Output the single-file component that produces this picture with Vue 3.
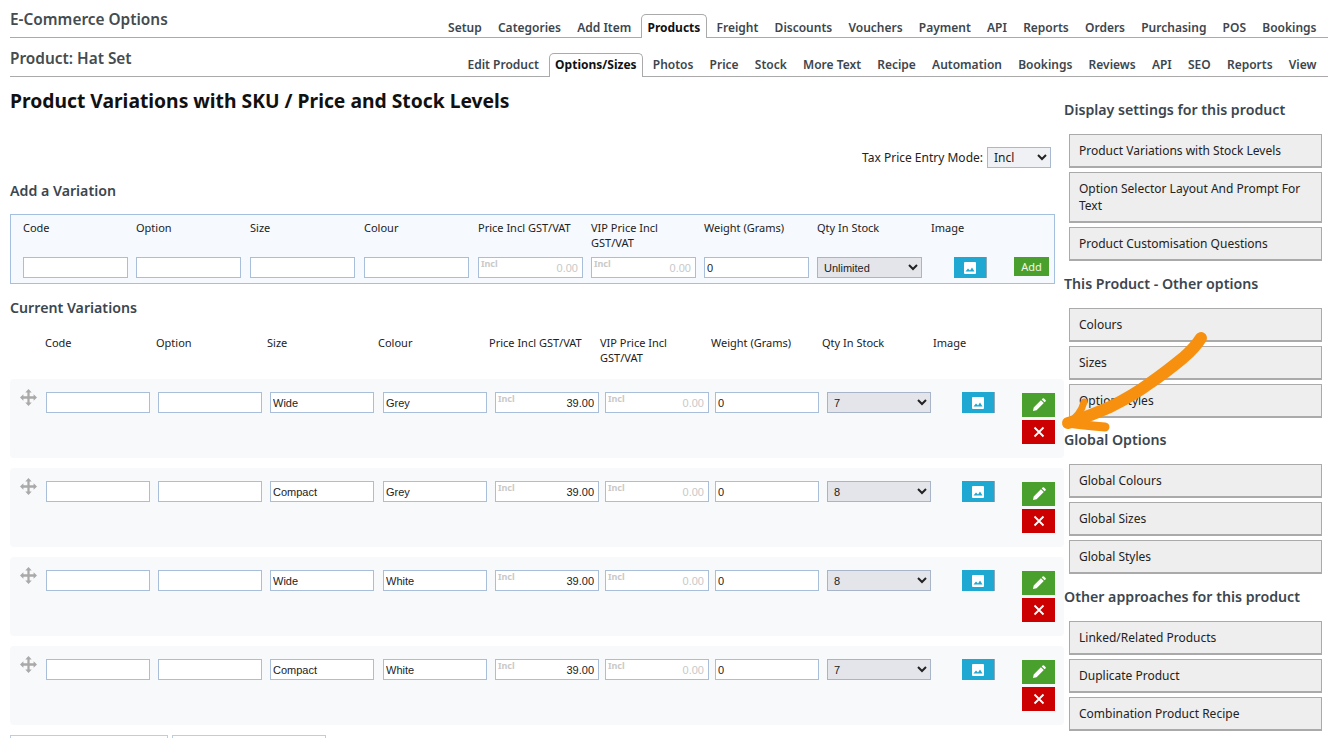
<template>
  <div class="page">
    <!-- Top tabs -->
    <div class="tabbar top">
      <div class="bar-title">E-Commerce Options</div>
      <div class="tabs">
        <a v-for="t in mainTabs" :key="t" class="tab" :class="{ active: t === 'Products' }">{{ t }}</a>
      </div>
    </div>
    <div class="tabbar second">
      <div class="bar-title">Product: Hat Set</div>
      <div class="tabs">
        <a v-for="t in productTabs" :key="t" class="tab" :class="{ active: t === 'Options/Sizes' }">{{ t }}</a>
      </div>
    </div>

    <div class="content">
      <div class="main">
        <h1>Product Variations with SKU / Price and Stock Levels</h1>

        <div class="tax-mode">
          <span>Tax Price Entry Mode:</span>
          <select class="tax-select"><option>Incl</option></select>
        </div>

        <h3 class="add-title">Add a Variation</h3>
        <div class="add-box">
          <div v-for="h in headers" :key="h" class="add-head">{{ h }}</div>
          <div class="add-head"></div>

          <div class="cell"><input class="field" /></div>
          <div class="cell"><input class="field" /></div>
          <div class="cell"><input class="field" /></div>
          <div class="cell"><input class="field" /></div>
          <div class="cell price-wrap">
            <span class="incl">Incl</span>
            <input class="field price dim" value="0.00" disabled />
          </div>
          <div class="cell price-wrap">
            <span class="incl">Incl</span>
            <input class="field price dim" value="0.00" disabled />
          </div>
          <div class="cell"><input class="field" value="0" /></div>
          <div class="cell"><select class="field qty"><option>Unlimited</option></select></div>
          <div class="cell">
            <button class="img-btn add-img">
              <svg width="14" height="14" viewBox="0 0 14 14">
                <path fill="#fff" d="M2 1h10a1 1 0 0 1 1 1v10a1 1 0 0 1-1 1H2a1 1 0 0 1-1-1V2a1 1 0 0 1 1-1z" />
                <path fill="#1fa8d2" d="M2.500 10.500l2.500-3 2 2 2-3 2.500 4z" />
              </svg>
            </button>
          </div>
          <div class="cell"><button class="add-btn">Add</button></div>
        </div>

        <h3 class="current-title">Current Variations</h3>
        <div class="current-head">
          <div v-for="h in headers" :key="h" class="current-label">{{ h }}</div>
        </div>

        <div v-for="(v, i) in variations" :key="i" class="var-row">
          <svg class="drag" width="17" height="17" viewBox="0 0 18 18">
            <path fill="#a9a9a9" d="M9 0l3.400 3.600h-2.200V7.800h4.200V5.600L18 9l-3.600 3.400v-2.200h-4.200v4.200h2.200L9 18l-3.400-3.600h2.200v-4.200H3.600v2.200L0 9l3.600-3.400v2.200h4.200V3.600H5.600z" />
          </svg>
          <div class="var-cells">
            <input class="field" />
            <input class="field" />
            <input class="field" :value="v.size" />
            <input class="field" :value="v.colour" />
            <div class="price-wrap">
              <span class="incl">Incl</span>
              <input class="field price" value="39.00" />
            </div>
            <div class="price-wrap">
              <span class="incl">Incl</span>
              <input class="field price dim" value="0.00" disabled />
            </div>
            <input class="field" value="0" />
            <select class="field qty"><option>{{ v.qty }}</option></select>
          </div>
          <button class="img-btn">
            <svg width="14" height="14" viewBox="0 0 14 14">
              <path fill="#fff" d="M2 1h10a1 1 0 0 1 1 1v10a1 1 0 0 1-1 1H2a1 1 0 0 1-1-1V2a1 1 0 0 1 1-1z" />
              <path fill="#1fa8d2" d="M2.500 10.500l2.500-3 2 2 2-3 2.500 4z" />
            </svg>
          </button>
          <div class="actions">
            <button class="act edit">
              <svg width="14" height="14" viewBox="0 0 14 14">
                <path fill="#fff" d="M1 13l.7-3.600 7.200-7.200 2.900 2.900-7.200 7.200zM9.700 1.400l.9-.9a1 1 0 0 1 1.400 0l1.500 1.500a1 1 0 0 1 0 1.400l-.9.900z" />
              </svg>
            </button>
            <button class="act del">
              <svg width="12" height="12" viewBox="0 0 12 12">
                <path stroke="#fff" stroke-width="1.800" d="M1.500 1.500l9 9M10.500 1.500l-9 9" />
              </svg>
            </button>
          </div>
        </div>

        <div class="bottom-btns">
          <button class="outline first"></button>
          <button class="outline"></button>
        </div>
      </div>

      <div class="side">
        <div v-for="g in sideGroups" :key="g.title" class="side-group">
          <h3>{{ g.title }}</h3>
          <a v-for="l in g.links" :key="l" class="side-btn">{{ l }}</a>
        </div>
      </div>
    </div>

    <!-- Orange annotation arrow -->
    <svg class="arrow" width="1335" height="738" viewBox="0 0 1335 738">
      <path fill="none" stroke="#f8900f" stroke-width="12" stroke-linecap="round" stroke-linejoin="round"
        d="M1201 338C1196 346 1190 352 1183 358C1172 367 1162 375 1150 383C1138 392 1124 400 1110 407C1096 413 1082 419 1068 423" />
      <path fill="none" stroke="#f8900f" stroke-width="7" stroke-linecap="round" stroke-linejoin="round"
        d="M1084 402C1082 410 1076 418 1068 423" />
      <path fill="none" stroke="#f8900f" stroke-width="9" stroke-linecap="round" stroke-linejoin="round"
        d="M1068 423C1080 425 1092 426 1105 427" />
    </svg>
  </div>
</template>

<script setup>
const mainTabs = ['Setup', 'Categories', 'Add Item', 'Products', 'Freight', 'Discounts', 'Vouchers', 'Payment', 'API', 'Reports', 'Orders', 'Purchasing', 'POS', 'Bookings']
const productTabs = ['Edit Product', 'Options/Sizes', 'Photos', 'Price', 'Stock', 'More Text', 'Recipe', 'Automation', 'Bookings', 'Reviews', 'API', 'SEO', 'Reports', 'View']
const headers = ['Code', 'Option', 'Size', 'Colour', 'Price Incl GST/VAT', 'VIP Price Incl GST/VAT', 'Weight (Grams)', 'Qty In Stock', 'Image']

const variations = [
  { size: 'Wide', colour: 'Grey', qty: 7 },
  { size: 'Compact', colour: 'Grey', qty: 8 },
  { size: 'Wide', colour: 'White', qty: 8 },
  { size: 'Compact', colour: 'White', qty: 7 }
]

const sideGroups = [
  {
    title: 'Display settings for this product',
    links: ['Product Variations with Stock Levels', 'Option Selector Layout And Prompt For Text', 'Product Customisation Questions']
  },
  { title: 'This Product - Other options', links: ['Colours', 'Sizes', 'Option Styles'] },
  { title: 'Global Options', links: ['Global Colours', 'Global Sizes', 'Global Styles'] },
  { title: 'Other approaches for this product', links: ['Linked/Related Products', 'Duplicate Product', 'Combination Product Recipe'] }
]
</script>

<style>
html, body {
  overflow: hidden;
  background: #fff;
}
</style>

<style scoped>
.page {
  position: relative;
  height: 738px;
  overflow: hidden;
  padding: 0 7px 0 10px;
  box-sizing: border-box;
  font-family: "Noto Sans", sans-serif;
  font-size: 12px;
  color: #222;
}

.tabbar {
  display: flex;
  justify-content: space-between;
  border-bottom: 1px solid #aaa;
}

.top {
  height: 37px;
}

.second {
  height: 38px;
}

.bar-title {
  font-size: 15.400px;
  font-weight: 600;
  color: #444c50;
  padding-top: 9px;
}

.second .bar-title {
  padding-top: 10px;
}

.tabs {
  display: flex;
  align-items: flex-end;
  padding-right: 5px;
}

.tab {
  font-size: 12px;
  font-weight: 600;
  color: #3d464d;
  line-height: 21px;
  padding: 2px 5.500px 0;
  margin: 0 0 -1px 3.200px;
  border: 1px solid transparent;
  border-bottom: none;
}

.second .tab {
  padding: 0 5.500px 2px;
}

.tab.active {
  background: #fff;
  color: #111;
  font-weight: 700;
  border-color: #aaa;
  border-radius: 5px 5px 0 0;
}

.content {
  display: flex;
}

.main {
  flex: 0 0 1054px;
}

h1 {
  margin: 10px 0 0;
  font-size: 19.300px;
  font-weight: 700;
  line-height: 27px;
  color: #111;
}

.tax-mode {
  display: flex;
  justify-content: flex-end;
  align-items: center;
  gap: 4px;
  width: 1041px;
  margin-top: 33px;
}

.tax-select {
  width: 64px;
  height: 21px;
  font: 12px "Noto Sans", sans-serif;
  padding-left: 2px;
  background: #f0f1f4;
  border: 1px solid #a8b8d0;
  color: #222;
}

h3 {
  margin: 0;
  font-size: 14.200px;
  font-weight: 600;
  line-height: 19px;
  color: #3c464e;
}

.add-title {
  margin-top: 13px;
}

.add-box {
  display: grid;
  grid-template-columns: 113px 114px 114px 114px 113px 113px 113px 114px 83px 1fr;
  grid-template-rows: 37px 28px;
  width: 1045px;
  height: 70px;
  margin-top: 14px;
  padding: 0 0 0 12px;
  box-sizing: border-box;
  background: #f6f9fd;
  border: 1px solid #a5c0df;
  font-size: 11px;
}

.add-head {
  padding-top: 5px;
  line-height: 15px;
  padding-right: 10px;
}

.cell {
  padding-top: 5px;
}

.field {
  display: block;
  width: 105px;
  height: 21px;
  padding: 0 2px;
  box-sizing: border-box;
  background: #fff;
  border: 1px solid #a9bfd9;
  border-radius: 0;
  outline: none;
  font: 11px "Liberation Sans", sans-serif;
  color: #222;
}

.price {
  text-align: right;
  padding-right: 4px;
}

.dim {
  color: #c8c8c8;
  background: #fff;
}

.price-wrap {
  position: relative;
}

.incl {
  position: absolute;
  left: 3px;
  margin-top: 1px;
  font-size: 9px;
  font-weight: 700;
  line-height: 12px;
  color: #c9c9c9;
  z-index: 1;
}

.qty {
  background: #e4e5ea;
  padding-left: 2px;
  border-color: #a8b4c8;
}

.img-btn {
  display: flex;
  align-items: center;
  justify-content: center;
  width: 33px;
  height: 21px;
  padding: 0;
  border: none;
  border-right: 1px solid #8fa9ba;
  background: #1fa8d2;
}

.add-img {
  margin-left: 23px;
}

.add-btn {
  display: block;
  width: 35px;
  height: 19px;
  padding: 0;
  border: none;
  background: #4aa02c;
  color: #eef7ea;
  font: 11px "Noto Sans", sans-serif;
}

.current-title {
  margin-top: 14px;
}

.current-head {
  display: grid;
  grid-template-columns: repeat(9, 111px);
  height: 44px;
  margin: 18px 0 0 35px;
  font-size: 11px;
}

.current-label {
  line-height: 15px;
  padding-right: 14px;
}

.var-row {
  display: flex;
  align-items: flex-start;
  position: relative;
  width: 1054px;
  height: 79px;
  margin-bottom: 10px;
  padding: 13px 0 0 36px;
  box-sizing: border-box;
  background: #f8f9fa;
  border-radius: 4px;
}

.var-cells {
  display: grid;
  grid-template-columns: 112px 112px 113px 112px 110px 110px 112px 112px;
  flex: none;
}

.var-cells .field {
  width: 104px;
}

.drag {
  position: absolute;
  left: 10px;
  top: 10px;
}

.var-row > .img-btn {
  margin-left: 23px;
}

.actions {
  display: flex;
  flex-direction: column;
  gap: 3px;
  margin: 1px 0 0 27px;
}

.act {
  display: flex;
  align-items: center;
  justify-content: center;
  width: 33px;
  height: 24px;
  padding: 0;
  border: none;
}

.edit {
  background: #4aa02c;
}

.del {
  background: #cc0000;
}

.bottom-btns {
  display: flex;
  gap: 4px;
  margin-top: 3px;
}

.outline {
  width: 154px;
  height: 24px;
  padding: 0;
  background: #fff;
  border: 1px solid #b9cfe6;
}

.outline.first {
  width: 158px;
}

.side {
  flex: 1;
  padding-top: 23px;
}

.side-group {
  margin-bottom: 12.500px;
}

.side-group h3 {
  margin-bottom: 15px;
}

.side-btn {
  display: block;
  margin: 0 0 4px 5px;
  padding: 7px 8px 7px 9px;
  box-sizing: border-box;
  width: 253px;
  background: #eee;
  border: 1px solid #aaa;
  border-bottom-width: 2px;
  line-height: 17px;
  color: #222;
}

.arrow {
  position: absolute;
  left: 0;
  top: 0;
  pointer-events: none;
}
</style>
